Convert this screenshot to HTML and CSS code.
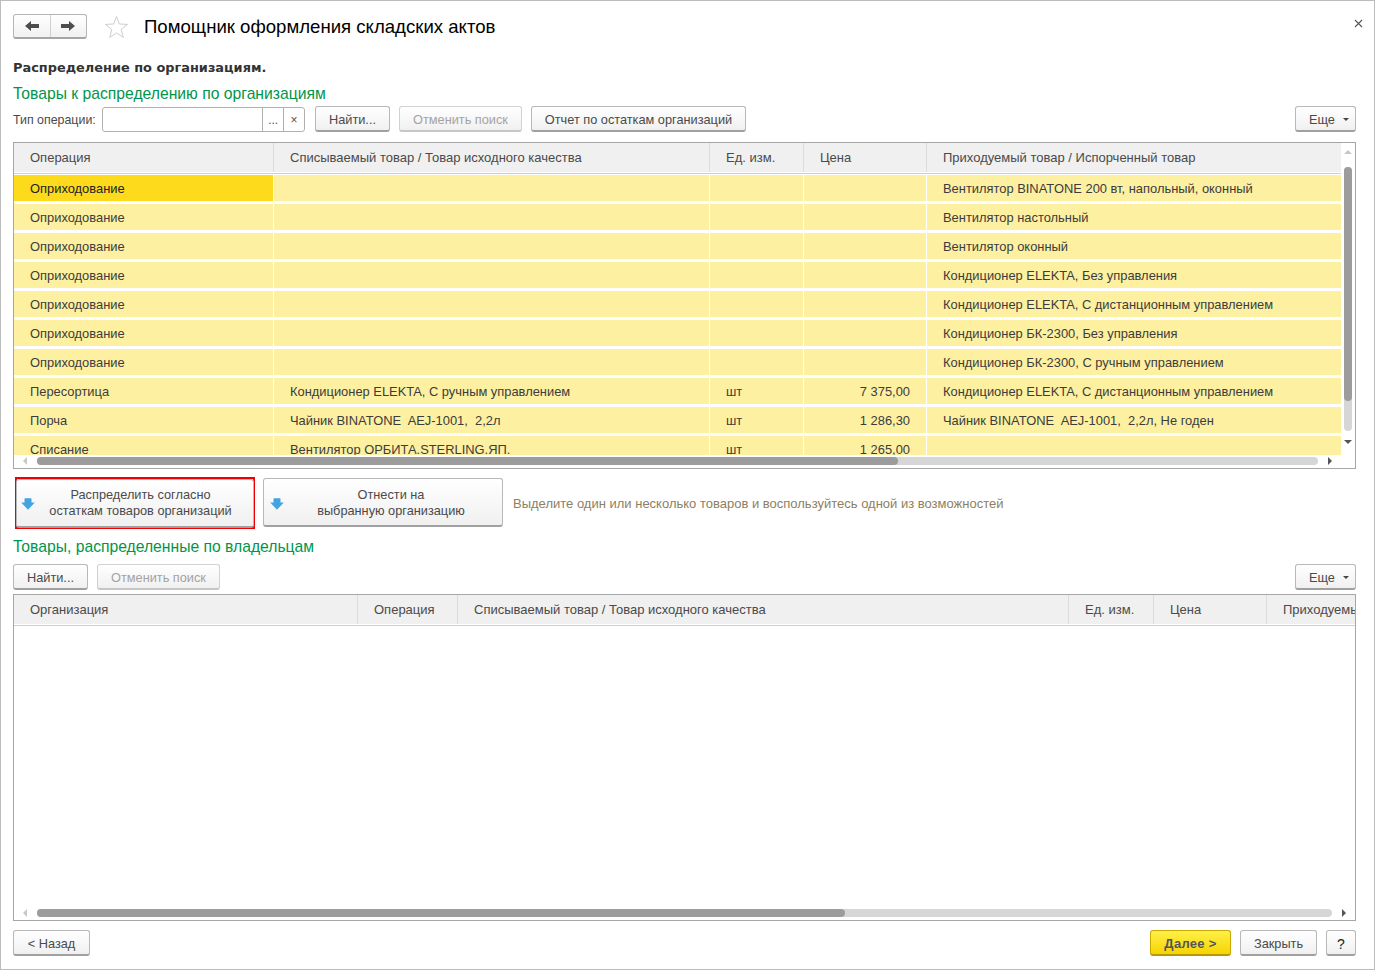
FILE: index.html
```html
<!DOCTYPE html>
<html lang="ru">
<head>
<meta charset="utf-8">
<title>Помощник оформления складских актов</title>
<link rel="stylesheet" href="styles.css">
</head>
<body>
<div class="window">
  <header class="titlebar">
    <div class="nav">
      <button class="nav-btn"><svg width="16" height="12" viewBox="0 0 16 12"><path d="M1 6 L7 1 V4 H15 V8 H7 V11 Z" fill="#4d4d4d"/></svg></button>
      <button class="nav-btn"><svg width="16" height="12" viewBox="0 0 16 12"><path d="M15 6 L9 1 V4 H1 V8 H9 V11 Z" fill="#4d4d4d"/></svg></button>
    </div>
    <svg class="star" width="25" height="24" viewBox="0 0 25 24"><path d="M12.5 1.5 L15.4 9 L23.5 9.4 L17.2 14.5 L19.3 22.4 L12.5 18 L5.7 22.4 L7.8 14.5 L1.5 9.4 L9.6 9 Z" fill="#fff" stroke="#c9ced2" stroke-width="1"/></svg>
    <h1 class="title">Помощник оформления складских актов</h1>
    <svg class="close" width="9" height="9" viewBox="0 0 9 9"><path d="M1 1 L8 8 M8 1 L1 8" stroke="#555" stroke-width="1.1"/></svg>
  </header>

  <div class="subtitle">Распределение по организациям.</div>
  <h2 class="group first">Товары к распределению по организациям</h2>

  <div class="toolbar">
    <label class="field-label">Тип операции:</label>
    <div class="field">
      <span class="field-input"></span>
      <span class="field-btn">...</span>
      <span class="field-btn">×</span>
    </div>
    <button class="btn w-find">Найти...</button>
    <button class="btn w-cancel" disabled>Отменить поиск</button>
    <button class="btn w-report">Отчет по остаткам организаций</button>
    <button class="btn more">Еще <i class="caret"></i></button>
  </div>

  <section class="grid grid-top">
    <div class="grid-main">
      <div class="viewport">
        <div class="head cols-a">
          <div>Операция</div><div>Списываемый товар / Товар исходного качества</div><div>Ед. изм.</div><div>Цена</div><div>Приходуемый товар / Испорченный товар</div>
        </div>
        <div class="row cols-a"><div class="sel">Оприходование</div><div></div><div></div><div></div><div>Вентилятор BINATONE 200 вт, напольный, оконный</div></div>
        <div class="row cols-a"><div>Оприходование</div><div></div><div></div><div></div><div>Вентилятор настольный</div></div>
        <div class="row cols-a"><div>Оприходование</div><div></div><div></div><div></div><div>Вентилятор оконный</div></div>
        <div class="row cols-a"><div>Оприходование</div><div></div><div></div><div></div><div>Кондиционер ELEKTA, Без управления</div></div>
        <div class="row cols-a"><div>Оприходование</div><div></div><div></div><div></div><div>Кондиционер ELEKTA, С дистанционным управлением</div></div>
        <div class="row cols-a"><div>Оприходование</div><div></div><div></div><div></div><div>Кондиционер БК-2300, Без управления</div></div>
        <div class="row cols-a"><div>Оприходование</div><div></div><div></div><div></div><div>Кондиционер БК-2300, С ручным управлением</div></div>
        <div class="row cols-a"><div>Пересортица</div><div>Кондиционер ELEKTA, С ручным управлением</div><div>шт</div><div class="num">7 375,00</div><div>Кондиционер ELEKTA, С дистанционным управлением</div></div>
        <div class="row cols-a"><div>Порча</div><div>Чайник BINATONE&nbsp; AEJ-1001,&nbsp; 2,2л</div><div>шт</div><div class="num">1 286,30</div><div>Чайник BINATONE&nbsp; AEJ-1001,&nbsp; 2,2л, Не годен</div></div>
        <div class="row cols-a"><div>Списание</div><div>Вентилятор ОРБИТА.STERLING.ЯП.</div><div>шт</div><div class="num">1 265,00</div><div></div></div>
      </div>
      <div class="vscroll">
        <i class="tri up"></i>
        <div class="vtrack"><div class="vthumb"></div></div>
        <i class="tri down"></i>
      </div>
    </div>
    <div class="hscroll hs-top">
      <i class="tri left"></i>
      <div class="htrack"><div class="hthumb"></div></div>
      <i class="tri right"></i>
    </div>
  </section>

  <div class="actions">
    <div class="highlight">
      <button class="btn action"><svg class="act-icon" width="14" height="12" viewBox="0 0 14 12"><path d="M3.5 1 Q3.5 0.3 4.2 0.3 H9.8 Q10.5 0.3 10.5 1 V4.6 H13.8 L7 11.7 L0.2 4.6 H3.5 Z" fill="#42a3e2"/></svg><span>Распределить согласно<br>остаткам товаров организаций</span></button>
    </div>
    <button class="btn action second"><svg class="act-icon" width="14" height="12" viewBox="0 0 14 12"><path d="M3.5 1 Q3.5 0.3 4.2 0.3 H9.8 Q10.5 0.3 10.5 1 V4.6 H13.8 L7 11.7 L0.2 4.6 H3.5 Z" fill="#42a3e2"/></svg><span>Отнести на<br>выбранную организацию</span></button>
    <p class="hint">Выделите один или несколько товаров и воспользуйтесь одной из возможностей</p>
  </div>

  <h2 class="group second-group">Товары, распределенные по владельцам</h2>

  <div class="toolbar tb2">
    <button class="btn w-find">Найти...</button>
    <button class="btn w-cancel2" disabled>Отменить поиск</button>
    <button class="btn more">Еще <i class="caret"></i></button>
  </div>

  <section class="grid grid-bottom">
    <div class="viewport vp-bottom">
      <div class="head cols-b">
        <div>Организация</div><div>Операция</div><div>Списываемый товар / Товар исходного качества</div><div>Ед. изм.</div><div>Цена</div><div>Приходуемый товар</div>
      </div>
    </div>
    <div class="hscroll hs-bottom">
      <i class="tri left"></i>
      <div class="htrack"><div class="hthumb"></div></div>
      <i class="tri right"></i>
    </div>
  </section>

  <footer class="footer">
    <button class="btn w-back">&lt; Назад</button>
    <button class="btn primary">Далее &gt;</button>
    <button class="btn w-close">Закрыть</button>
    <button class="btn w-help">?</button>
  </footer>
</div>
</body>
</html>
```
FILE: styles.css
```css
* { box-sizing: border-box; }
html, body { margin: 0; padding: 0; background: #fff; }
body { font-family: "Liberation Sans", Arial, sans-serif; font-size: 13px; color: #4a4a4a; }

.window {
  width: 1375px; height: 970px;
  border: 1px solid #bcbcbc;
  padding: 0 18px 0 12px;
  overflow: hidden;
}

.titlebar { display: flex; align-items: center; height: 50px; padding-top: 1px; }
.nav { display: flex; width: 74px; height: 25px; border: 1px solid #b5b5b5; border-radius: 3px; border-bottom: 2px solid #a5a5a5; background: linear-gradient(#fff, #f1f1f1); }
.nav-btn { flex: 1; padding: 0; margin: 0; border: 0; background: none; display: flex; align-items: center; justify-content: center; }
.nav-btn + .nav-btn { border-left: 1px solid #d0d0d0; }
.star { margin-left: 17px; }
.title { margin: 0 0 0 15px; font-size: 18.6px; font-weight: 400; color: #000; flex: 1; }
.close { margin-right: -7px; margin-top: -7px; }

.subtitle { font-family: "DejaVu Sans", sans-serif; font-weight: 700; font-size: 12.9px; color: #333; line-height: 16px; margin-top: 9px; }
.group { margin: 0; font-size: 15.7px; font-weight: 400; color: #00954a; line-height: 20px; }
.group.first { margin-top: 8px; }
.second-group { margin-top: 8px; }

.toolbar { display: flex; align-items: center; height: 26px; margin-top: 2px; }
.tb2 { margin-top: 7px; }
.field-label { width: 89px; font-size: 12.4px; margin-top: 2px; }
.field { display: flex; width: 203px; height: 25px; border: 1px solid #b0b0b0; border-radius: 3px; background: #fff; margin-right: 10px; }
.field-input { width: 160px; }
.field-btn { width: 21px; border-left: 1px solid #b0b0b0; text-align: center; line-height: 24px; font-size: 12px; color: #555; }

.btn {
  font: inherit; font-size: 12.75px; color: #4a4a4a;
  height: 26px; padding: 2px 0 0;
  border: 1px solid #b8b8b8; border-bottom: 2px solid #a0a0a0; border-radius: 3px;
  background: linear-gradient(#fff, #f0f0f0);
  margin-right: 9px;
}
.btn[disabled] { color: #a3a3a3; border-color: #d2d2d2; border-bottom-color: #c6c6c6; }
.w-find { width: 75px; }
.w-cancel { width: 123px; }
.w-cancel2 { width: 123px; }
.w-report { width: 215px; }
.more { width: 61px; margin: 0 0 0 auto; position: relative; text-align: left; padding-left: 13px; }
.caret { position: absolute; right: 6px; top: 11px; width: 0; height: 0; border: 3px solid transparent; border-top: 3px solid #444; border-bottom: 0; }

.grid { border: 1px solid #a6a6a6; background: #fff; display: flex; flex-direction: column; }
.grid-top { height: 327px; margin-top: 10px; }
.grid-main { display: flex; height: 312px; }
.viewport { flex: 1; overflow: hidden; min-width: 0; }

.cols-a { display: grid; grid-template-columns: 260px 436px 94px 123px 415px; }
.cols-b { display: grid; grid-template-columns: 344px 100px 611px 85px 113px 200px; }

.head { height: 31px; padding-bottom: 1px; margin-bottom: 1px; background: #fff; border-bottom: 1px solid #cfcfcf; color: #4a4a4a; }
.head > div { background: #f0f0f0; padding: 0 0 0 16px; line-height: 29px; border-right: 1px solid #dcdcdc; white-space: nowrap; overflow: hidden; }
.head > div:last-child { border-right: 0; }

.row { height: 29px; font-size: 12.9px; }
.row > div { height: 26px; background: #fdf0a1; line-height: 27px; padding: 0 16px; border-right: 1px solid #fff; white-space: nowrap; overflow: hidden; color: #3c3c3c; }
.row > div:last-child { border-right: 0; }
.row > div.sel { background: #fdda1c; color: #222; }
.row > div.num { text-align: right; }

.vscroll { width: 14px; display: flex; flex-direction: column; align-items: center; flex: none; }
.vtrack { flex: 1; width: 8px; background: #d6d6d6; border-radius: 4px; margin: 13px 0 9px; }
.vthumb { height: 234px; background: #9c9c9c; border-radius: 4px; }

.hscroll { height: 13px; display: flex; align-items: center; padding: 0 9px 1px 9px; flex: none; }
.hs-top { padding-right: 23px; }
.htrack { flex: 1; height: 8px; background: #d6d6d6; border-radius: 4px; margin: 0 10px; }
.hthumb { height: 8px; background: #9c9c9c; border-radius: 4px; }
.hs-top .hthumb { width: 861px; }
.hs-bottom .hthumb { width: 808px; }

.tri { display: block; width: 0; height: 0; border: 4px solid transparent; flex: none; }
.tri.up { border-top: 0; border-bottom-color: #c8c8c8; margin-top: 7px; }
.tri.down { border-bottom: 0; border-top-color: #555; margin-bottom: 11px; }
.tri.left { border-left: 0; border-right-color: #c8c8c8; }
.tri.right { border-right: 0; border-left-color: #555; }

.actions { display: flex; align-items: flex-start; height: 52px; margin-top: 8px; }
.highlight { border: 2px solid #ee0000; width: 240px; height: 52px; margin-left: 2px; margin-right: 8px; }
.action { position: relative; height: 49px; width: 238px; margin: 0 -1px; line-height: 16px; padding: 0 0 0 11px; display: block; }
.action.second { width: 240px; margin: 1px 10px 0 0; padding: 2px 0 0 16px; }
.act-icon { position: absolute; left: 4px; top: 18px; }
.second .act-icon { left: 6px; top: 19px; }
.hint { margin: 19px 0 0; color: #8c7f62; line-height: 16px; }

.grid-bottom { height: 327px; margin-top: 4px; }

.footer { display: flex; align-items: center; height: 26px; margin-top: 9px; }
.w-back { width: 77px; margin-right: auto; }
.primary { width: 81px; background: linear-gradient(#fff04a, #f5d400); border-color: #c9a800; border-bottom-color: #b89a00; font-weight: 700; color: #555; font-size: 13px; letter-spacing: 0.3px; }
.w-close { width: 77px; }
.w-help { width: 30px; margin-right: 0; color: #222; font-size: 14px; }
```
